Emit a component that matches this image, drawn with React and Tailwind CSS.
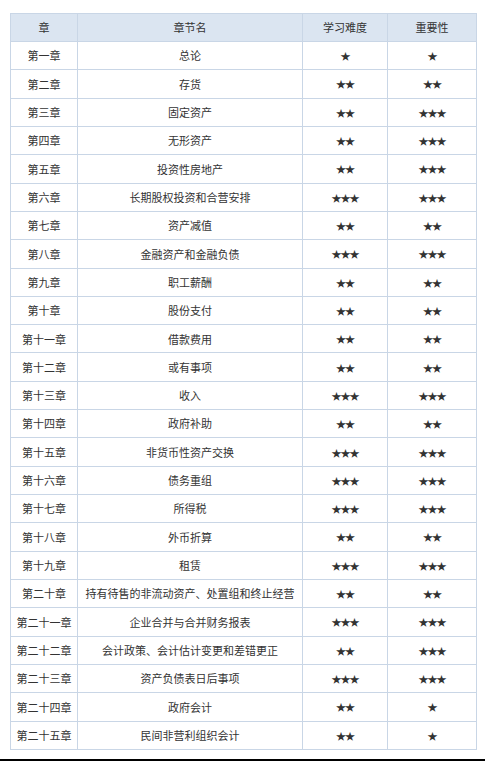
import React from "react";

const rows = [
  ["第一章", "总论", 1, 1],
  ["第二章", "存货", 2, 2],
  ["第三章", "固定资产", 2, 3],
  ["第四章", "无形资产", 2, 3],
  ["第五章", "投资性房地产", 2, 3],
  ["第六章", "长期股权投资和合营安排", 3, 3],
  ["第七章", "资产减值", 2, 2],
  ["第八章", "金融资产和金融负债", 3, 3],
  ["第九章", "职工薪酬", 2, 2],
  ["第十章", "股份支付", 2, 2],
  ["第十一章", "借款费用", 2, 2],
  ["第十二章", "或有事项", 2, 2],
  ["第十三章", "收入", 3, 3],
  ["第十四章", "政府补助", 2, 2],
  ["第十五章", "非货币性资产交换", 3, 3],
  ["第十六章", "债务重组", 3, 3],
  ["第十七章", "所得税", 3, 3],
  ["第十八章", "外币折算", 2, 2],
  ["第十九章", "租赁", 3, 3],
  ["第二十章", "持有待售的非流动资产、处置组和终止经营", 2, 2],
  ["第二十一章", "企业合并与合并财务报表", 3, 3],
  ["第二十二章", "会计政策、会计估计变更和差错更正", 2, 3],
  ["第二十三章", "资产负债表日后事项", 3, 3],
  ["第二十四章", "政府会计", 2, 1],
  ["第二十五章", "民间非营利组织会计", 2, 1],
];

const stars = (n) => "★".repeat(n);

const cell = "border border-[#c9d6e6] text-center align-middle px-1";

const App = () => {
  return (
    <div
      className="w-[485px] h-[761px] bg-white flex flex-col text-[#333] text-[11px]"
      style={{ fontFamily: '"Microsoft YaHei", "Noto Sans CJK SC", sans-serif' }}
    >
      <div className="pt-[13px] pl-[10px] pr-[9px]">
        <table className="w-[466px] border-collapse table-fixed">
          <colgroup>
            <col className="w-[67px]" />
            <col className="w-[225px]" />
            <col className="w-[85px]" />
            <col className="w-[89px]" />
          </colgroup>
          <thead>
            <tr className="h-[28px] bg-[#dbe5f1]">
              <th className={`${cell} font-normal`}>章</th>
              <th className={`${cell} font-normal`}>章节名</th>
              <th className={`${cell} font-normal`}>学习难度</th>
              <th className={`${cell} font-normal`}>重要性</th>
            </tr>
          </thead>
          <tbody>
            {rows.map(([ch, name, d, imp]) => (
              <tr key={ch} className="h-[28.32px]">
                <td className={cell}>{ch}</td>
                <td className={`${cell} whitespace-nowrap`}>{name}</td>
                <td className={`${cell} text-[10px] tracking-[-1px]`}>{stars(d)}</td>
                <td className={`${cell} text-[10px] tracking-[-1px]`}>{stars(imp)}</td>
              </tr>
            ))}
          </tbody>
        </table>
      </div>
      <div className="mt-auto h-[2px] bg-black" />
    </div>
  );
};

export default App;
